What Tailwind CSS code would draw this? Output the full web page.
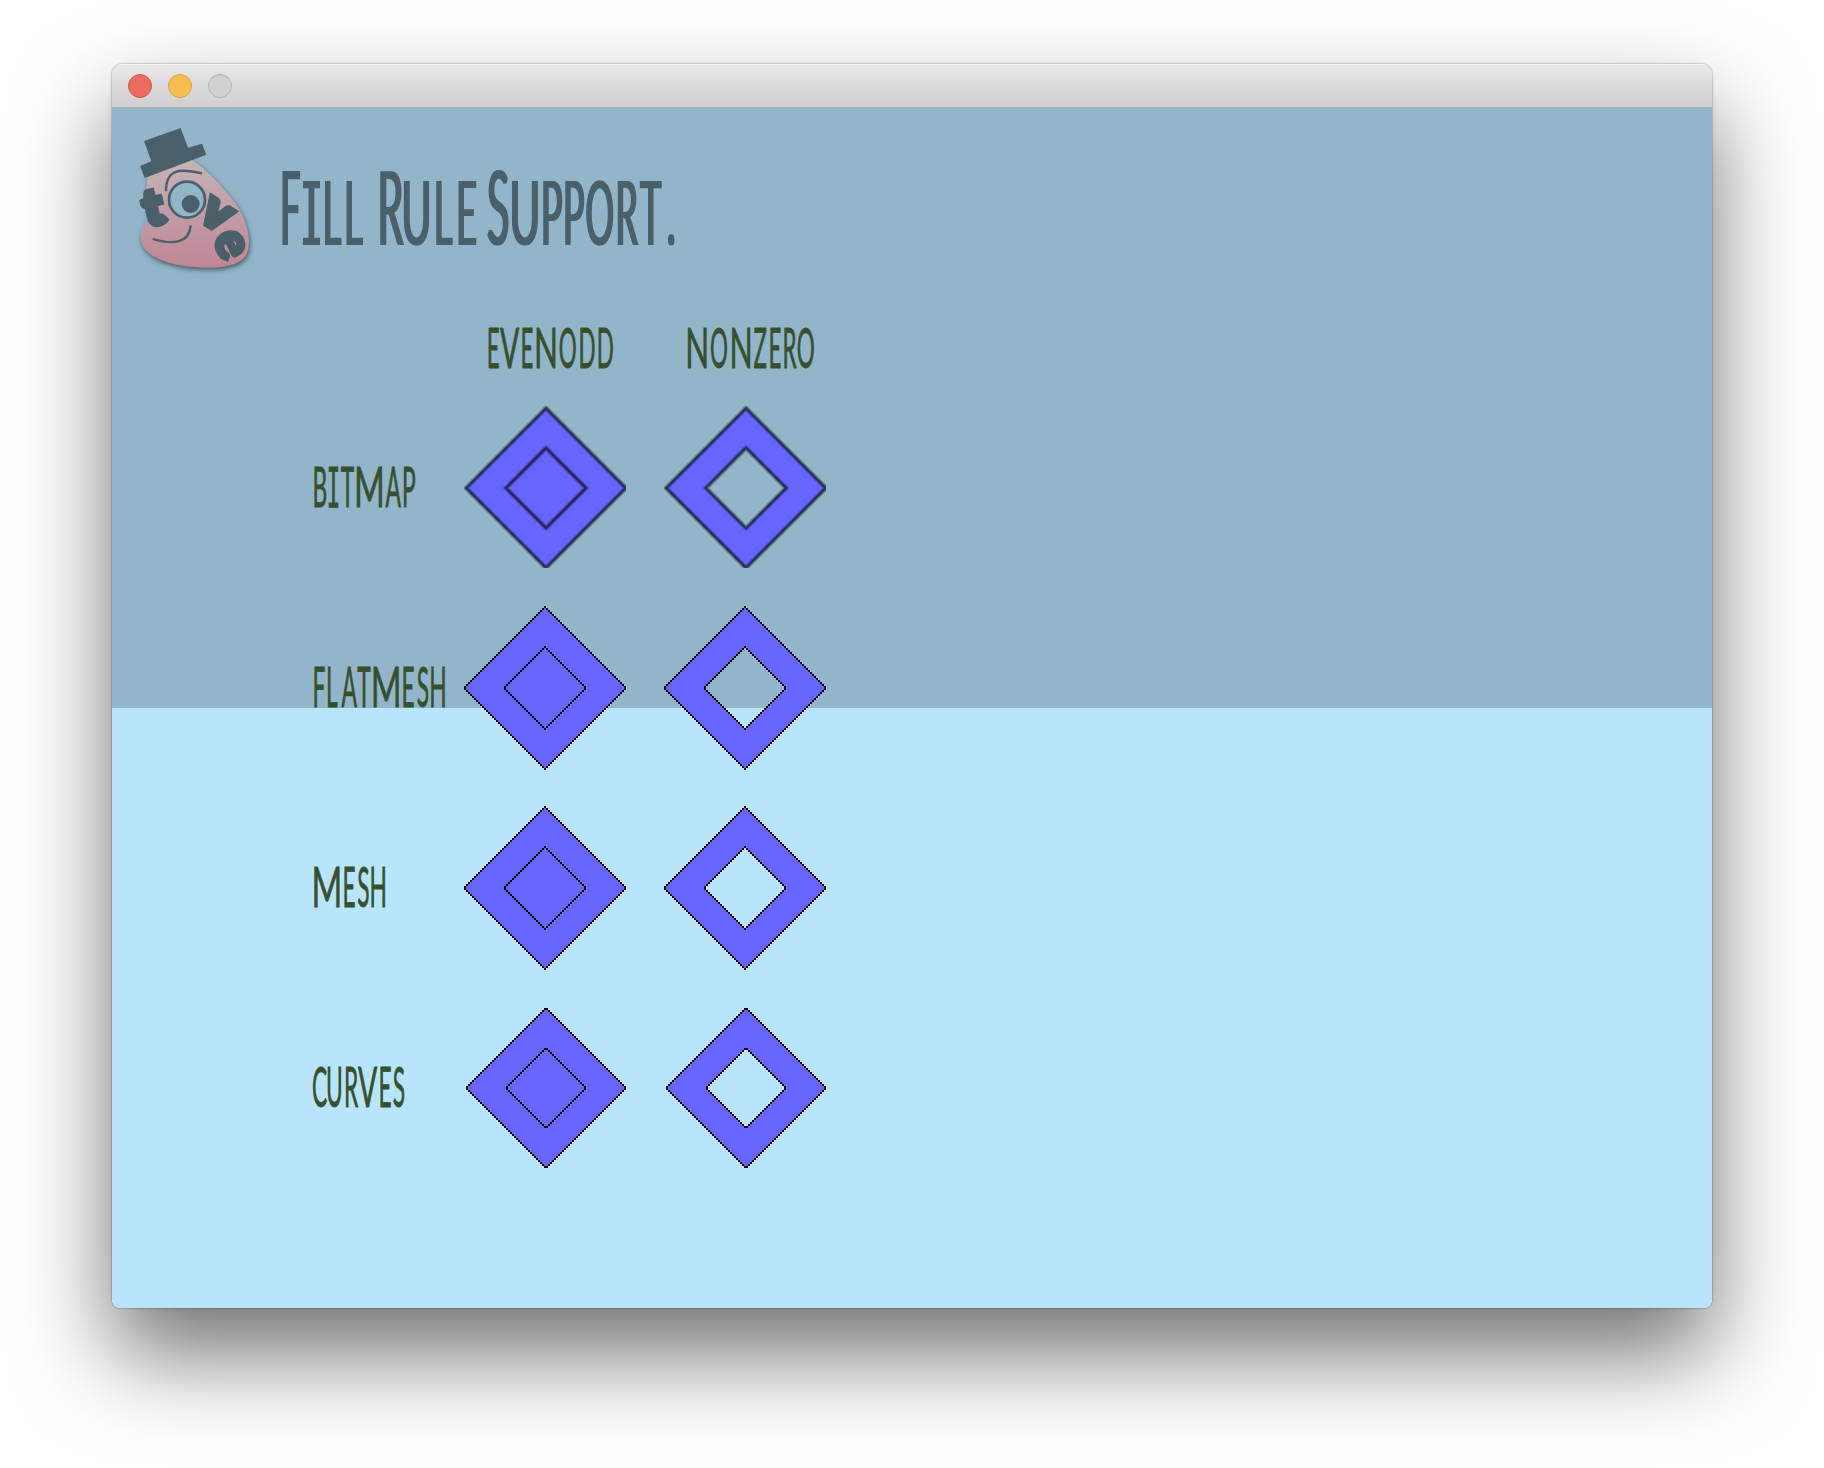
<!DOCTYPE html>
<html lang="en">
<head>
<meta charset="utf-8">
<title>Fill Rule Support</title>
<script src="https://cdn.jsdelivr.net/npm/@tailwindcss/browser@4"></script>
</head>
<body class="bg-white w-[1824px] h-[1468px] overflow-hidden pt-16 px-28">
<svg width="0" height="0" class="absolute"><defs>
  <filter id="bold" x="-5%" y="-5%" width="110%" height="110%"><feMorphology operator="dilate" radius="1 0"/></filter>
</defs></svg>
<main class="w-[1600px] h-[1244px] rounded-t-[10px] rounded-b-[8px] overflow-hidden flex flex-col shadow-[0_0_2px_rgba(0,0,0,0.6),0_46px_94px_rgba(0,0,0,0.56)]">
  <header class="h-11 shrink-0 flex items-center gap-4 pl-4 bg-linear-to-b from-[#e9e7e9] to-[#d1ced1] border-b border-[#b0adb0] border-t border-t-[#f5f4f5]">
    <span class="size-6 rounded-full bg-[#ed6b5f] border border-[#d5544a]"></span>
    <span class="size-6 rounded-full bg-[#f6be50] border border-[#d9a040]"></span>
    <span class="size-6 rounded-full bg-[#d0d0d0] border border-[#b0b0b0]"></span>
  </header>
  <section class="h-[1200px] shrink-0 bg-linear-to-b from-[#92b5ca] from-50% to-[#b8e5fc] to-50%">
    <div class="h-[192px] flex pt-[7px] pl-[18px] gap-[10px]">
      <svg class="w-[130px] h-[165px] shrink-0 overflow-visible" viewBox="0 0 390 495">
        <defs>
          <linearGradient id="skin" x1="0" y1="0" x2="0" y2="1"><stop offset="0" stop-color="#c5b4b4"/><stop offset=".5" stop-color="#c19ca7"/><stop offset="1" stop-color="#bf8794"/></linearGradient>
          <filter id="drop" x="-20%" y="-20%" width="140%" height="140%"><feDropShadow dx="3" dy="7" stdDeviation="8" flood-color="#354854" flood-opacity=".85"/></filter>
        </defs>
        <path filter="url(#drop)" fill="url(#skin)" d="M55 185C90 160 150 130 185 136C225 160 270 205 320 270C355 325 368 390 345 425C320 455 260 460 205 457C130 453 60 430 40 395C25 365 32 335 57 315C50 270 45 215 55 185Z"/>
        <path fill="#4a5f6a" d="M42 78L152 39L174 98L216 86L229 119L44 189L30 153L64 139Z"/>
        <circle cx="171" cy="254" r="54" fill="#92b5ca" stroke="#4a5f6a" stroke-width="8"/>
        <circle cx="182" cy="267" r="27" fill="#4a5f6a"/>
        <path d="M108 229C108 160 150 160 216 175M68 372C130 390 178 385 182 331" fill="none" stroke="#4a5f6a" stroke-width="7"/>
        <g fill="#4a5f6a" stroke="#4a5f6a" class="font-['Lato'] font-black">
          <text font-size="146" stroke-width="20" text-anchor="middle" transform="translate(80 326) rotate(-13)">t</text>
          <text font-size="148" stroke-width="18" text-anchor="middle" transform="translate(237 332) rotate(33)">v</text>
          <text font-size="152" stroke-width="12" text-anchor="middle" transform="translate(264 406) rotate(64)">e</text>
        </g>
      </svg>
      <svg class="w-[420px] h-[110px] mt-[35px] shrink-0 overflow-visible font-['Lato'] uppercase" viewBox="270 150 420 110" fill="#4a5f6a">
        <g filter="url(#bold)" transform="translate(1.5 0)"><text transform="scale(.4 1)" y="245" font-size="89"><tspan font-size="103" x="697" textLength="50" lengthAdjust="spacingAndGlyphs">F</tspan><tspan font-family="DejaVu Sans Mono" font-size="88" x="747" textLength="56" lengthAdjust="spacingAndGlyphs">i</tspan><tspan x="803 857">ll</tspan> <tspan font-size="103" x="940">R</tspan><tspan x="1000" textLength="75" lengthAdjust="spacingAndGlyphs">u</tspan><tspan x="1081 1137">le</tspan> <tspan font-size="103" x="1214">S</tspan><tspan x="1270" textLength="77" lengthAdjust="spacingAndGlyphs">u</tspan><tspan x="1349 1404 1460 1535 1597 1664">pport.</tspan></text></g>
      </svg>
    </div>
    <div class="w-[640px] ml-[188px] grid grid-cols-[152px_200px_200px] auto-rows-[200px] grid-rows-[92px]">
      <span></span>
      <svg class="w-[200px] h-[92px] overflow-visible font-['Lato'] uppercase" viewBox="452 300 200 92" fill="#36502f" stroke="#36502f" stroke-width=".8"><text transform="scale(.4 1)" y="368" font-size="56"><tspan x="1217">e</tspan><tspan x="1250" textLength="48" lengthAdjust="spacingAndGlyphs">v</tspan><tspan x="1301">e</tspan><tspan x="1335" textLength="60" lengthAdjust="spacingAndGlyphs">n</tspan><tspan x="1397 1446 1492">odd</tspan></text></svg>
      <svg class="w-[200px] h-[92px] overflow-visible font-['Lato'] uppercase" viewBox="652 300 200 92" fill="#36502f" stroke="#36502f" stroke-width=".8"><text transform="scale(.4 1)" y="368" font-size="56"><tspan x="1713" textLength="60" lengthAdjust="spacingAndGlyphs">n</tspan><tspan x="1775">o</tspan><tspan x="1824" textLength="58" lengthAdjust="spacingAndGlyphs">n</tspan><tspan x="1884 1921 1956 1992">zero</tspan></text></svg>

      <svg class="w-[152px] h-[200px] overflow-visible font-['Lato'] uppercase" viewBox="300 392 152 200" fill="#36502f" stroke="#36502f" stroke-width=".8"><text transform="scale(.4 1)" y="507.5" font-size="57"><tspan x="781">b</tspan><tspan font-family="DejaVu Sans Mono" font-size="56" x="817">i</tspan><tspan x="852">t</tspan><tspan x="885" textLength="77" lengthAdjust="spacingAndGlyphs">m</tspan><tspan x="964 1005">ap</tspan></text></svg>
      <svg class="w-[200px] h-[200px]" viewBox="452 392 200 200" data-kind="bitmap"></svg>
      <svg class="w-[200px] h-[200px]" viewBox="452 392 200 200" data-kind="bitmap" data-hole="1"></svg>

      <svg class="w-[152px] h-[200px] overflow-visible font-['Lato'] uppercase" viewBox="300 392 152 200" fill="#36502f" stroke="#36502f" stroke-width=".8"><text transform="scale(.4 1)" y="507.5" font-size="57"><tspan x="781 815 854 893">flat</tspan><tspan x="927" textLength="77" lengthAdjust="spacingAndGlyphs">m</tspan><tspan x="1004 1042 1073">esh</tspan></text></svg>
      <svg class="w-[200px] h-[200px]" viewBox="452 392 200 200" data-kind="mesh"></svg>
      <svg class="w-[200px] h-[200px]" viewBox="452 392 200 200" data-kind="mesh" data-hole="1"></svg>

      <svg class="w-[152px] h-[200px] overflow-visible font-['Lato'] uppercase" viewBox="300 392 152 200" fill="#36502f" stroke="#36502f" stroke-width=".8"><text transform="scale(.4 1)" y="507.5" font-size="57"><tspan x="779" textLength="77" lengthAdjust="spacingAndGlyphs">m</tspan><tspan x="856 893 924">esh</tspan></text></svg>
      <svg class="w-[200px] h-[200px]" viewBox="452 392 200 200" data-kind="mesh"></svg>
      <svg class="w-[200px] h-[200px]" viewBox="452 392 200 200" data-kind="mesh" data-hole="1"></svg>

      <svg class="w-[152px] h-[200px] overflow-visible font-['Lato'] uppercase" viewBox="300 392 152 200" fill="#36502f" stroke="#36502f" stroke-width=".8"><text transform="scale(.4 1)" y="507.5" font-size="57"><tspan x="780">c</tspan><tspan x="815 860">ur</tspan><tspan x="895" textLength="48" lengthAdjust="spacingAndGlyphs">v</tspan><tspan x="946 982">es</tspan></text></svg>
      <svg class="w-[200px] h-[200px]" viewBox="452 392 200 200" data-kind="curves"></svg>
      <svg class="w-[200px] h-[200px]" viewBox="452 392 200 200" data-kind="curves" data-hole="1"></svg>
    </div>
  </section>
</main>
<script>
// Stepped diamond outlines on a grid of 2px cells; w and h are counted in cells.
function cells(x, y, w, h) {
  const rows = [];
  const half = Math.floor(h / 2);
  const mid = Math.floor((w - 1) / 2);
  for (let r = 0; r < h; r++) {
    const k = r < half ? r : h - 1 - r;
    const l = Math.max(0, mid - k);
    rows.push([x + 2 * l, x + 2 * (w - 1 - l), y + 2 * r]);
  }
  return {
    fill: rows.map(([a, b, t]) => `M${a} ${t}H${b + 2}V${t + 2}H${a}Z`).join(''),
    inner: rows.map(([a, b, t]) => b - a > 2 ? `M${a + 2} ${t}V${t + 2}H${b}V${t}Z` : '').join(''),
    edge: rows.map(([a, b, t]) => `M${a} ${t}h2v2h-2zM${b} ${t}h2v2h-2z`).join('')
  };
}
document.querySelectorAll('svg[data-kind]').forEach(s => {
  const kind = s.dataset.kind, hole = s.dataset.hole;
  if (kind === 'bitmap') {
    const o = 'M546 408L626 488L546 568L466 488Z', i = 'M546 448L506 488L546 528L586 488Z';
    s.innerHTML = `<clipPath id="c"><path d="M464 406H626V568H464Z"/></clipPath><g clip-path="url(#c)"><path fill="#66f" d="${o}${hole ? i : ''}"/><path d="${o}${i}" fill="none" stroke="#000" stroke-opacity=".3" stroke-width="4.6"/><path d="${o}${i}" fill="none" stroke="#000" stroke-opacity=".48" stroke-width="2.2"/></g>`;
  } else {
    const c = kind === 'curves';
    const o = c ? cells(466, 408, 80, 80) : cells(464, 406, 81, 82);
    const i = c ? cells(506, 448, 40, 40) : cells(504, 446, 41, 42);
    s.innerHTML = `<g shape-rendering="crispEdges"><path fill="#66f" fill-rule="evenodd" d="${o.fill}${hole ? i.inner : ''}"/><path d="${o.edge}${i.edge}"/></g>`;
  }
});
</script>
</body>
</html>
